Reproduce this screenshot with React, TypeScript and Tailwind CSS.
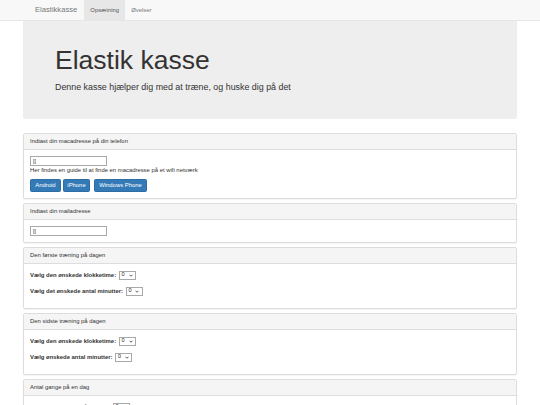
import React from "react";

const font = { fontFamily: '"Liberation Sans", Arial, sans-serif' };

function Panel({ title, children }: { title: string; children: React.ReactNode }) {
  return (
    <div className="mb-[4px] rounded-[2px] border border-[#ddd] bg-white shadow-[0_1px_1px_rgba(0,0,0,0.05)]">
      <div className="h-[16px] rounded-t-[2px] border-b border-[#ddd] bg-[#f5f5f5] px-[6px] text-[5.9px] leading-[15px] text-[#333]">
        {title}
      </div>
      <div className="px-[6px] pt-[6px] pb-[6px]">{children}</div>
    </div>
  );
}

function Select() {
  return (
    <span className="ml-[3px] inline-flex h-[9px] w-[17px] items-center justify-between border border-[#a9a9a9] bg-white px-[1.5px] align-middle text-[5.5px] font-normal leading-none text-[#222]">
      <span>0</span>
      <svg width="4" height="3" viewBox="0 0 8 5" className="mr-[1px]">
        <path d="M1 1l3 3 3-3" fill="none" stroke="#333" strokeWidth="1.6" />
      </svg>
    </span>
  );
}

function Row({ label }: { label: string }) {
  return (
    <div className="mb-[6px] flex h-[10px] items-center text-[5.9px] font-bold text-[#333]">
      <span>{label}</span>
      <Select />
    </div>
  );
}

function Input() {
  return (
    <div className="flex h-[10px] w-[77px] items-center border border-[#a9a9a9] bg-white px-[2px] text-[5.5px] text-[#333]">
      [[
    </div>
  );
}

const buttons = [
  { label: "Android", cls: "w-[31px]" },
  { label: "iPhone", cls: "ml-[2px] w-[27px]" },
  { label: "Windows Phone", cls: "ml-[4px] w-[53px]" },
];

export default function App() {
  return (
    <div className="min-h-[405px] bg-white text-[#333]" style={font}>
      <nav className="h-[21px] border-b border-[#e7e7e7] bg-[#f8f8f8]">
        <div className="mx-auto flex h-full w-[494px] items-stretch">
          <span className="ml-[12px] flex items-center text-[7.6px] text-[#777]">Elastikkasse</span>
          <span className="ml-[7px] flex w-[41px] items-center justify-center bg-[#e7e7e7] text-[5.9px] text-[#555]">
            Opsætning
          </span>
          <span className="ml-[6px] flex items-center text-[5.9px] text-[#777]">Øvelser</span>
        </div>
      </nav>

      <div className="mx-auto w-[494px]">
        <div className="mb-[14px] rounded-b-[2.5px] bg-[#eee] pt-[25px] pb-[25px] pl-[32px]">
          <h1 className="text-[26.5px] leading-[29px] text-[#333]">Elastik kasse</h1>
          <p className="mt-[6px] text-[8.9px] leading-[12.6px] text-[#333]">
            Denne kasse hjælper dig med at træne, og huske dig på det
          </p>
        </div>

        <Panel title="Indtast din macadresse på din telefon">
          <div className="pt-[0.5px]">
            <Input />
          </div>
          <p className="text-[5.9px] leading-[8.4px]">Her findes en guide til at finde en macadresse på et wifi netværk</p>
          <div className="mt-[4px] flex">
            {buttons.map((b) => (
              <span
                key={b.label}
                className={`${b.cls} flex h-[13.5px] items-center justify-center rounded-[1.5px] border border-[#2e6da4] bg-[#337ab7] text-[5.9px] text-white`}
              >
                {b.label}
              </span>
            ))}
          </div>
        </Panel>

        <Panel title="Indtast din mailadresse">
          <Input />
        </Panel>

        <Panel title="Den første træning på dagen">
          <Row label="Vælg den ønskede klokketime:" />
          <Row label="Vælg det ønskede antal minutter:" />
        </Panel>

        <Panel title="Den sidste træning på dagen">
          <Row label="Vælg den ønskede klokketime:" />
          <Row label="Vælg ønskede antal minutter:" />
        </Panel>

        <Panel title="Antal gange på en dag">
          <Row label="Vælg antal gange på en dag:" />
        </Panel>
      </div>
    </div>
  );
}
